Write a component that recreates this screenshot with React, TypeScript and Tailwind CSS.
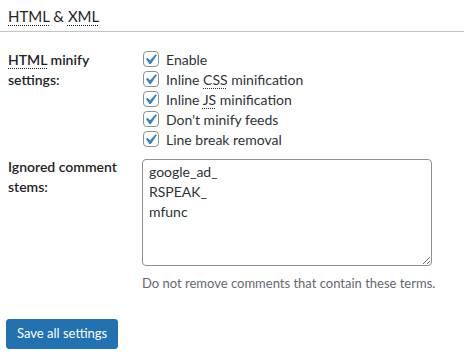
import type { ReactNode } from "react";

const font = { fontFamily: '"Segoe UI", Lato, "Liberation Sans", sans-serif' };

function Abbr({ children }: { children: ReactNode }) {
  return (
    <span className="underline decoration-dotted decoration-1 underline-offset-[3px]">{children}</span>
  );
}

function Checkbox({ label }: { label: ReactNode }) {
  return (
    <label className="flex h-5 items-center gap-[7px] text-[14px] text-[#2c3338]">
      <span className="relative ml-px h-4 w-4 shrink-0 rounded-[4px] border border-[#8c8f94] bg-white">
        <svg viewBox="0 0 20 20" className="absolute -left-[4px] -top-[3px] h-[21px] w-[21px]">
          <path d="M14.83 4.89l1.34.94-5.81 8.38H9.02L5.78 9.67l1.34-1.25 2.57 2.4z" fill="#3582c4" />
        </svg>
      </span>
      <span>{label}</span>
    </label>
  );
}

export default function App() {
  return (
    <div className="h-[360px] w-[464px] overflow-hidden bg-white text-[#1d2327]" style={font}>
      <div className="border-b border-[#c3c4c7] px-2 pt-[6px] pb-[5px]">
        <h2 className="text-[15px] leading-[20px] font-normal">
          <Abbr>HTML</Abbr> &amp; <Abbr>XML</Abbr>
        </h2>
      </div>

      <div className="mt-[17px] flex">
        <div className="w-[142px] shrink-0 pl-2 pt-px text-[14px] font-semibold leading-5">
          <Abbr>HTML</Abbr> minify
          <br />
          settings:
        </div>
        <div className="flex flex-col">
          <Checkbox label="Enable" />
          <Checkbox label={<>Inline <Abbr>CSS</Abbr> minification</>} />
          <Checkbox label={<>Inline <Abbr>JS</Abbr> minification</>} />
          <Checkbox label="Don't minify feeds" />
          <Checkbox label="Line break removal" />
        </div>
      </div>

      <div className="mt-[10px] flex">
        <div className="-mt-[2px] w-[142px] shrink-0 pl-2 text-[14px] font-semibold leading-5">
          Ignored comment
          <br />
          stems:
        </div>
        <div className="flex flex-col">
          <textarea
            readOnly
            defaultValue={"google_ad_\nRSPEAK_\nmfunc"}
            className="h-[107px] w-[290px] rounded-[4px] border border-[#8c8f94] px-[6px] py-[2px] text-[14px] leading-5 text-[#2c3338] outline-none"
            style={font}
          />
          <p className="mt-[8px] text-[13px] leading-[18px] text-[#646970]">
            Do not remove comments that contain these terms.
          </p>
        </div>
      </div>

      <div className="mt-[27px] pl-[6px]">
        <button className="h-[30px] rounded-[3px] border border-[#2271b1] bg-[#2271b1] px-[10px] text-[13px] text-white">
          Save all settings
        </button>
      </div>
    </div>
  );
}
